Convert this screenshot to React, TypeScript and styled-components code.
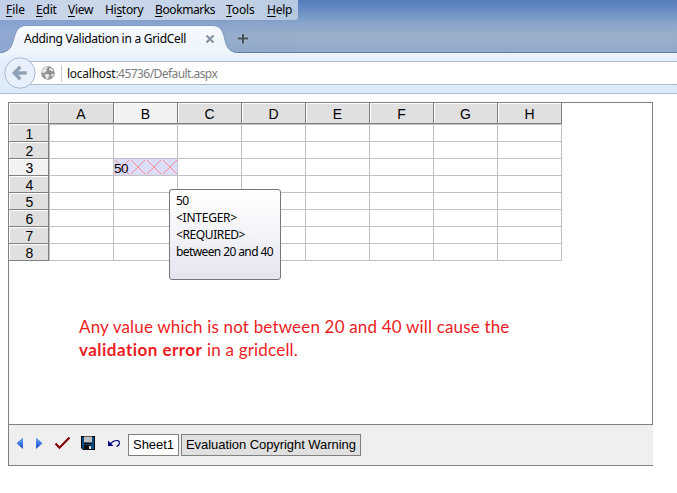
import React from "react";
import styled, { createGlobalStyle } from "styled-components";

const Global = createGlobalStyle`
  * { box-sizing: border-box; }
  html, body { margin: 0; background: #fff; overflow: hidden; }
`;
const ui = `"Noto Sans", "Open Sans", sans-serif`;
const arial = `"Liberation Sans", Arial, sans-serif`;

const Page = styled.div`
  width: 677px;
  height: 493px;
  overflow: hidden;
  font-family: ${ui};
  color: #000;
`;
const TitleArea = styled.header`
  height: 53px;
  border-bottom: 1px solid #5f7ba1;
  background:
    linear-gradient(90deg, rgba(138, 163, 216, 0.55) 0, rgba(138, 163, 216, 0) 300px),
    linear-gradient(#537dbb 0, #6389c2 8px, #8aa6cb 24px, #9aafca 36px, #93a9c9 100%);
`;
const MenuBar = styled.nav`
  display: flex;
  width: 298px;
  height: 20px;
  padding-left: 6px;
  border-radius: 0 0 3px 0;
  background: linear-gradient(90deg, #c1cfe8, #cbd8ea 30%, #c2d1e6 80%, #b5c8df);
`;
const MenuItem = styled.span<{ $w: number; $ls: number }>`
  width: ${(p) => p.$w}px;
  flex: none;
  font-size: 12px;
  line-height: 20px;
  letter-spacing: ${(p) => p.$ls}px;
  white-space: nowrap;
  u { text-decoration-thickness: 1px; text-underline-offset: 2px; }
`;
const TabStrip = styled.div`
  display: flex;
  height: 33px;
  padding-top: 5px;
`;
const Tab = styled.div`
  position: relative;
  width: 238px;
  height: 28px;
  display: flex;
  align-items: center;
  padding-left: 24px;
`;
const TabShape = styled.svg`
  position: absolute;
  inset: 0;
`;
const TabTitle = styled.span`
  position: relative;
  width: 181px;
  font-size: 12px;
  letter-spacing: -0.28px;
  line-height: 28px;
  white-space: nowrap;
`;
const TabClose = styled.svg`
  position: relative;
`;
const NewTab = styled.svg`
  margin: 8px 0 0 0;
`;
const NavBar = styled.div`
  height: 41px;
  display: flex;
  align-items: center;
  border-bottom: 1px solid #a9bdd5;
  background: linear-gradient(#edf4fc, #e4eefa 8px, #dbe9f8 100%);
`;
const Back = styled.svg`
  flex: none;
  margin: 0 -15px 0 4px;
  z-index: 1;
`;
const UrlField = styled.div`
  flex: 1;
  height: 24px;
  display: flex;
  align-items: center;
  padding-left: 20px;
  border: solid #a9bcd4;
  border-width: 1px 0;
  background: #fff;
`;
const Divider = styled.i`
  width: 1px;
  height: 17px;
  margin: 0 5px 0 6px;
  background: #ccc;
`;
const Url = styled.span`
  padding-top: 2px;
  font-size: 12px;
  letter-spacing: -0.56px;
  line-height: 20px;
  color: #7b7b7b;
  white-space: nowrap;
  b { font-weight: 400; color: #111; letter-spacing: -0.25px; }
`;
const Sheet = styled.main`
  position: relative;
  width: 645px;
  height: 323px;
  margin: 8px 0 0 8px;
  border: 1px solid #808080;
`;
const Grid = styled.div`
  display: grid;
  grid-template-columns: 40px 65px repeat(7, 64px);
  grid-template-rows: 21px 18px repeat(7, 17px);
  width: 553px;
  font-family: ${arial};
`;
const Corner = styled.div`
  border: solid #808080;
  border-width: 0 1px 1px 0;
  background: #e0e0e0;
  box-shadow: inset 1px 1px #fff;
`;
const ColHead = styled.div<{ $on?: boolean }>`
  border: solid #808080;
  border-width: 0 1px 1px 0;
  background: ${(p) => (p.$on ? "#f2f2f2" : "#e0e0e0")};
  box-shadow: inset 1px 1px #fff;
  font-size: 14px;
  line-height: 22px;
  text-align: center;
`;
const RowHead = styled.div<{ $on?: boolean; $top?: boolean }>`
  border: solid #808080;
  border-width: 0 1px 1px 0;
  background: ${(p) => (p.$on ? "#f2f2f2" : "#e0e0e0")};
  box-shadow: inset 1px 1px #fff;
  font-size: 14px;
  line-height: 18px;
  padding: ${(p) => (p.$top ? 1 : 0)}px 0 0 2px;
  text-align: center;
`;
const Cell = styled.div<{ $first: boolean; $top: boolean; $bad: boolean }>`
  position: relative;
  border: solid #c0c0c0;
  border-width: ${(p) => (p.$top ? 1 : 0)}px 1px 1px ${(p) => (p.$first ? 1 : 0)}px;
  background: ${(p) => (p.$bad ? "#dcdcff" : "#fff")};
`;
const Hatch = styled.svg`
  position: absolute;
  left: 0;
  top: 0;
`;
const CellValue = styled.span`
  position: absolute;
  left: 0;
  top: 1px;
  font-size: 13.5px;
  letter-spacing: -0.5px;
  line-height: 17px;
`;
const Tip = styled.div`
  position: absolute;
  left: 160px;
  top: 86px;
  width: 112px;
  height: 91px;
  padding: 2px 0 0 6px;
  border: 1px solid #767676;
  border-radius: 3px;
  background: linear-gradient(#fff, #fafafc 25%, #e4e5f0);
`;
const TipLine = styled.div<{ $ls: number }>`
  font-size: 12px;
  line-height: 17px;
  letter-spacing: ${(p) => p.$ls}px;
  white-space: nowrap;
`;
const Note = styled.p`
  margin: 54px 0 0 70px;
  font-family: Lato, sans-serif;
  font-size: 17px;
  line-height: 23px;
  color: #ed1c24;
  white-space: nowrap;
`;
const NoteLine = styled.span<{ $ls: number }>`
  display: block;
  letter-spacing: ${(p) => p.$ls}px;
  b { letter-spacing: 0.47px; }
`;
const Footer = styled.footer`
  width: 645px;
  height: 41px;
  margin-left: 8px;
  display: flex;
  align-items: center;
  border: solid #808080;
  border-width: 0 0 1px 1px;
  background: #efefef;
`;
const Tools = styled.svg`
  flex: none;
  display: block;
  margin-top: -2px;
`;
const SheetTab = styled.div<{ $w: number; $ls: number; $on?: boolean }>`
  width: ${(p) => p.$w}px;
  height: 22px;
  margin-right: 2px;
  padding-left: 4px;
  border: 1px solid #808080;
  background: ${(p) => (p.$on ? "#fff" : "#e0e0e0")};
  font: 13px/20px ${arial};
  letter-spacing: ${(p) => p.$ls}px;
  white-space: nowrap;
`;

const menus: [string, string, string, number, number][] = [
  ["", "F", "ile", 30, -0.1],
  ["", "E", "dit", 32, -0.2],
  ["", "V", "iew", 37, -0.3],
  ["Hi", "s", "tory", 50, -0.3],
  ["", "B", "ookmarks", 71, -0.4],
  ["", "T", "ools", 41, -0.1],
  ["", "H", "elp", 30, -0.25],
];
const cols = ["A", "B", "C", "D", "E", "F", "G", "H"];
const rows = [1, 2, 3, 4, 5, 6, 7, 8];

export default function App() {
  return (
    <Page>
      <Global />
      <TitleArea>
        <MenuBar>
          {menus.map(([a, k, b, w, ls]) => (
            <MenuItem key={k} $w={w} $ls={ls}>{a}<u>{k}</u>{b}</MenuItem>
          ))}
        </MenuBar>
        <TabStrip>
          <Tab>
            <TabShape width="238" height="28">
              <defs>
                <linearGradient id="tab" x2="0" y2="1">
                  <stop offset="0" stopColor="#f7fafe" />
                  <stop offset="1" stopColor="#edf4fc" />
                </linearGradient>
              </defs>
              <path d="M0 28C20 27 8 .5 27 .5H212C231 .5 218 27 238 28Z" fill="url(#tab)" />
              <path d="M0 27.5C20 27 8 .5 27 .5H212C231 .5 218 27 238 27.5" fill="none" stroke="#6f8bb0" strokeOpacity=".75" />
            </TabShape>
            <TabTitle>Adding Validation in a GridCell</TabTitle>
            <TabClose width="10" height="10" viewBox="0 0 10 10">
              <path d="M1.5 1.5l7 7M8.500 1.500l-7 7" stroke="#8795a5" strokeWidth="2.3" />
            </TabClose>
          </Tab>
          <NewTab width="12" height="12">
            <path d="M5 .5v10M.2 5.500h10" stroke="#b5c4d8" strokeWidth="3.5" />
            <path d="M5 1v9.500M0 5.500h10" stroke="#424d59" strokeWidth="2" />
          </NewTab>
        </TabStrip>
      </TitleArea>
      <NavBar>
        <Back width="32" height="34" viewBox="0 0 32 34">
          <circle cx="16" cy="17" r="15.200" fill="#e8f1fb" stroke="#a6bad3" />
          <path d="M10 17H22.800M16.300 10.800L10.300 17L16.300 23.200" fill="none" stroke="#91a1b5" strokeWidth="3.400" />
        </Back>
        <UrlField>
          <svg width="14" height="14" viewBox="0 0 14 14">
            <circle cx="7" cy="7" r="6.800" fill="#929292" />
            <path d="M3 2L6 .8L7 2L5 3L6 4.500L4 6.500L1.200 7L1 5L2 3.500ZM9.500 2L11 2.500L12.500 5L11 5.500L9.500 4L8.500 4.500L8 3ZM3.500 8.500L7 8L8.800 9.500L7.500 11L7 13L5 12.500L4.500 10.500ZM10.500 8L12.800 8L11.500 11L10.200 10Z" fill="#e9e9e9" />
          </svg>
          <Divider />
          <Url><b>localhost</b>:45736/Default.aspx</Url>
        </UrlField>
      </NavBar>
      <Sheet>
        <Grid>
          <Corner />
          {cols.map((c) => <ColHead key={c} $on={c === "B"}>{c}</ColHead>)}
          {rows.map((r) => (
            <React.Fragment key={r}>
              <RowHead $on={r === 3} $top={r === 1}>{r}</RowHead>
              {cols.map((c) => {
                const bad = r === 3 && c === "B";
                return (
                  <Cell key={c} $first={c === "A"} $top={r === 1} $bad={bad}>
                    {bad && (
                      <>
                        <Hatch width="63" height="16">
                          {[0, 1, 2, 3].map((i) => (
                            <path key={i} d={`M${i * 16 + 1} 1l14 14M${i * 16 + 15} 1l-14 14`} stroke="#ff9090" />
                          ))}
                        </Hatch>
                        <CellValue>50</CellValue>
                      </>
                    )}
                  </Cell>
                );
              })}
            </React.Fragment>
          ))}
        </Grid>
        <Note>
          <NoteLine $ls={0.175}>Any value which is not between 20 and 40 will cause the</NoteLine>
          <NoteLine $ls={0.2}><b>validation error</b> in a gridcell.</NoteLine>
        </Note>
        <Tip>
          <TipLine $ls={-0.5}>50</TipLine>
          <TipLine $ls={-0.25}>&lt;INTEGER&gt;</TipLine>
          <TipLine $ls={-0.4}>&lt;REQUIRED&gt;</TipLine>
          <TipLine $ls={-0.6}>between 20 and 40</TipLine>
        </Tip>
      </Sheet>
      <Footer>
        <Tools width="119" height="22">
          <defs>
            <linearGradient id="arrow" x2="0" y2="1">
              <stop offset="0" stopColor="#69a8fa" />
              <stop offset="1" stopColor="#1649c4" />
            </linearGradient>
          </defs>
          <path d="M14 4.500V16L7.500 10.200Z" fill="url(#arrow)" />
          <path d="M27 4.500V16L33.500 10.200Z" fill="url(#arrow)" />
          <path d="M46.500 10.500L50.500 14.800L60.500 4.500" fill="none" stroke="#800000" strokeWidth="2.100" />
          <path d="M72 3H86V17H74L72 15Z" fill="#000" />
          <path d="M73 4H75V11H83V4H85V16H82V12H75V16H74L73 15Z" fill="#004f86" />
          <path d="M75 3.500H83V9.500H75Z" fill="#c0c0c0" />
          <path d="M75 12H82V17H75Z" fill="#111" />
          <path d="M80 13H82V16H80Z" fill="#dcdcdc" />
          <path d="M99 7.500V13H104.500Z" fill="#000080" />
          <path d="M101 11L104.500 8.200Q110.500 6 110.500 10.500Q110 12.500 107.500 13.500" fill="none" stroke="#000080" strokeWidth="1.200" />
        </Tools>
        <SheetTab $w={51} $ls={-0.02} $on>Sheet1</SheetTab>
        <SheetTab $w={180} $ls={-0.06}>Evaluation Copyright Warning</SheetTab>
      </Footer>
    </Page>
  );
}
